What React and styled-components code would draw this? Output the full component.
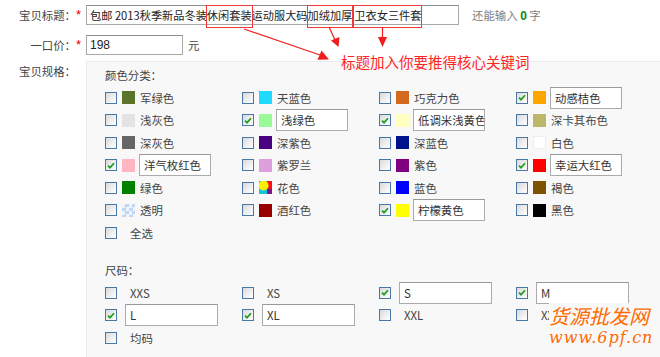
import React from 'react';
import styled, { createGlobalStyle } from 'styled-components';

const GlobalStyle = createGlobalStyle`
  html, body {
    margin: 0;
    padding: 0;
    background: #ffffff;
  }
`;

const colors = [
  { name: '军绿色', bg: '#5b742a' },
  { name: '天蓝色', bg: '#1edaff' },
  { name: '巧克力色', bg: '#d2691e' },
  { name: '动感桔色', bg: '#ffa500', on: true },
  { name: '浅灰色', bg: '#e3e3e3' },
  { name: '浅绿色', bg: '#98fb98', on: true },
  { name: '低调米浅黄色', bg: '#ffffc0', on: true },
  { name: '深卡其布色', bg: '#bdb76b' },
  { name: '深灰色', bg: '#666666' },
  { name: '深紫色', bg: '#4b0082' },
  { name: '深蓝色', bg: '#00138c' },
  { name: '白色', bg: '#ffffff' },
  { name: '洋气枚红色', bg: '#ffb6c1', on: true },
  { name: '紫罗兰', bg: '#dda0dd' },
  { name: '紫色', bg: '#800080' },
  { name: '幸运大红色', bg: '#ff0000', on: true },
  { name: '绿色', bg: '#008000' },
  { name: '花色', bg: 'flower' },
  { name: '蓝色', bg: '#0000ff' },
  { name: '褐色', bg: '#7f5200' },
  { name: '透明', bg: 'clear' },
  { name: '酒红色', bg: '#990000' },
  { name: '柠檬黄色', bg: '#ffff00', on: true },
  { name: '黑色', bg: '#000000' },
  { name: '全选' },
];

const sizes = [
  { name: 'XXS' },
  { name: 'XS' },
  { name: 'S', on: true },
  { name: 'M', on: true },
  { name: 'L', on: true },
  { name: 'XL', on: true },
  { name: 'XXL' },
  { name: 'XXXL' },
  { name: '均码' },
];

const Check = ({ on }) => (
  <CheckBox>
    {on && (
      <svg width="11" height="11" viewBox="0 0 11 11">
        <path d="M2.2 5.6 L4.4 7.9 L8.8 3" fill="none" stroke="#1f9e1f" strokeWidth="1.9" />
      </svg>
    )}
  </CheckBox>
);

const Flower = () => (
  <svg width="13" height="13" viewBox="0 0 13 13">
    <rect width="13" height="13" fill="#10c8dc" />
    <rect x="8" width="5" height="13" fill="#ff1010" />
    <rect x="8" y="8" width="5" height="5" fill="#7a1a8a" />
    <circle cx="4.5" cy="4.5" r="5" fill="#fff000" />
  </svg>
);

const ColorItem = ({ item }) => (
  <Item>
    <Check on={item.on} />
    {item.bg && (
      <Swatch $bg={item.bg}>{item.bg === 'flower' && <Flower />}</Swatch>
    )}
    {item.on ? (
      <TextBox $w={72} $ml={9}>{item.name}</TextBox>
    ) : (
      <ItemLabel $ml={item.bg ? 5 : 8}>{item.name}</ItemLabel>
    )}
  </Item>
);

const SizeItem = ({ item }) => (
  <Item>
    <Check on={item.on} />
    {item.on ? (
      <TextBox $w={93} $ml={8}>{item.name}</TextBox>
    ) : (
      <ItemLabel $ml={8}>{item.name}</ItemLabel>
    )}
  </Item>
);

const App = () => (
  <Page>
    <GlobalStyle />
    <Row $mb={10}>
      <Label>
        宝贝标题：<Star>*</Star>
      </Label>
      <TitleBox>
        包邮 2013秋季新品冬装<Mark>休闲套装</Mark>运动服大码<Mark>加绒加厚</Mark>
        <Gap />
        <Mark>卫衣女三件套</Mark>
      </TitleBox>
      <Counter>
        还能输入 <Count>0</Count> 字
      </Counter>
    </Row>
    <Row $mb={6}>
      <Label>
        一口价：<Star>*</Star>
      </Label>
      <PriceBox>198</PriceBox>
      <Unit>元</Unit>
    </Row>
    <SpecRow>
      <Label $top={3}>
        宝贝规格：<Star />
      </Label>
      <Panel>
        <SectionTitle>颜色分类：</SectionTitle>
        <Grid>
          {colors.map((c) => (
            <ColorItem key={c.name} item={c} />
          ))}
        </Grid>
        <SectionTitle $mt={19}>尺码：</SectionTitle>
        <Grid>
          {sizes.map((s) => (
            <SizeItem key={s.name} item={s} />
          ))}
        </Grid>
      </Panel>
    </SpecRow>

    <Arrows width="660" height="357" viewBox="0 0 660 357">
      <g stroke="#f21c1c" strokeWidth="1.2" fill="none">
        <line x1="244" y1="29" x2="320" y2="55" />
        <line x1="329" y1="27" x2="335" y2="40" />
        <line x1="382.5" y1="27" x2="382.5" y2="38" />
      </g>
      <g fill="#f21c1c">
        <polygon points="329,59.5 317.5,59.8 321.5,50.5" />
        <polygon points="338.5,47 331,40.5 339.5,37" />
        <polygon points="382.5,47 378,37 387,37" />
      </g>
    </Arrows>
    <Hint>标题加入你要推得核心关键词</Hint>
    <Watermark>
      <WatermarkName>货源批发网</WatermarkName>
      <WatermarkUrl>www.6pf.cn</WatermarkUrl>
    </Watermark>
  </Page>
);

export default App;

const Page = styled.div`
  position: relative;
  width: 660px;
  height: 357px;
  overflow: hidden;
  box-sizing: border-box;
  padding-top: 5px;
  background: #ffffff;
  font-family: "Noto Sans CJK SC", "Liberation Sans", sans-serif;
  font-size: 11.4px;
  color: #444444;
`;

const Row = styled.div`
  display: flex;
  align-items: center;
  height: 20px;
  margin-bottom: ${(p) => p.$mb}px;
`;

const SpecRow = styled.div`
  display: flex;
  align-items: flex-start;
`;

const Label = styled.div`
  width: 86px;
  flex: none;
  display: flex;
  justify-content: flex-end;
  line-height: 14px;
  padding-top: ${(p) => p.$top || 0}px;
  color: #444444;
  white-space: nowrap;
`;

const Star = styled.span`
  width: 10px;
  color: #e60000;
  font-family: "Liberation Sans", sans-serif;
  font-size: 13px;
  line-height: 14px;
`;

const Field = styled.div`
  box-sizing: border-box;
  height: 20px;
  border: 1px solid #a9a9a9;
  border-top-color: #8e8e8e;
  background: #ffffff;
  display: flex;
  align-items: center;
  white-space: nowrap;
  color: #222222;
`;

const TitleBox = styled(Field)`
  width: 373px;
  padding-left: 3px;
  font-size: 11.2px;
  overflow: visible;
`;

const PriceBox = styled(Field)`
  width: 97px;
  padding-left: 3px;
  font-family: "Liberation Sans", sans-serif;
  font-size: 12px;
`;

const Mark = styled.span`
  position: relative;
  &::after {
    content: '';
    position: absolute;
    left: -1px;
    right: -1px;
    top: -2px;
    bottom: -5px;
    border: 1.4px solid #ee3a3a;
  }
`;

const Gap = styled.span`
  display: inline-block;
  width: 2px;
`;

const Counter = styled.div`
  margin-left: 13px;
  color: #808080;
  white-space: nowrap;
`;

const Count = styled.b`
  color: #0a8a0a;
  font-family: "Liberation Sans", sans-serif;
  font-size: 12px;
`;

const Unit = styled.span`
  margin-left: 5px;
  color: #444444;
`;

const Panel = styled.div`
  flex: 1;
  height: 300px;
  box-sizing: border-box;
  padding: 6px 0 0 18px;
  background: #f8f8f8;
  border-top: 1px solid #ececec;
  border-left: 1px solid #ececec;
`;

const SectionTitle = styled.div`
  line-height: 14px;
  margin-top: ${(p) => p.$mt || 0}px;
  margin-bottom: 4.5px;
  color: #444444;
`;

const Grid = styled.div`
  display: grid;
  grid-template-columns: repeat(4, 137px);
  grid-auto-rows: 22.5px;
`;

const Item = styled.div`
  display: flex;
  align-items: center;
  white-space: nowrap;
`;

const CheckBox = styled.span`
  box-sizing: border-box;
  width: 12px;
  height: 12px;
  flex: none;
  border: 1px solid #4a77a6;
  background: linear-gradient(135deg, #d9d9d9 0%, #efefef 55%, #ffffff 100%);
  display: flex;
  align-items: center;
  justify-content: center;
  margin-right: 5px;
  svg {
    display: block;
  }
`;

const swatchBg = (bg) => {
  if (bg === 'clear') {
    return 'repeating-conic-gradient(#c3d7f3 0 25%, #eef4fc 0 50%) 0 0 / 7px 7px';
  }
  if (bg === 'flower') return 'transparent';
  return bg;
};

const Swatch = styled.span`
  box-sizing: border-box;
  width: 13px;
  height: 13px;
  flex: none;
  background: ${(p) => swatchBg(p.$bg)};
  border: ${(p) => (p.$bg === '#ffffff' ? '1px solid #eeeeee' : 'none')};
  svg {
    display: block;
  }
`;

const ItemLabel = styled.span`
  margin-left: ${(p) => p.$ml}px;
  line-height: 14px;
  color: #444444;
`;

const TextBox = styled.span`
  box-sizing: border-box;
  width: ${(p) => p.$w}px;
  height: 22px;
  margin-left: ${(p) => p.$ml - 5}px;
  padding-left: 4px;
  display: flex;
  align-items: center;
  background: #ffffff;
  border: 1px solid #ababab;
  border-top-color: #999999;
  color: #333333;
  overflow: hidden;
`;

const Arrows = styled.svg`
  position: absolute;
  left: 0;
  top: 0;
  pointer-events: none;
`;

const Hint = styled.div`
  position: absolute;
  left: 341px;
  top: 53px;
  font-size: 14.5px;
  line-height: 18px;
  color: #ff2424;
  white-space: nowrap;
`;

const Watermark = styled.div`
  position: absolute;
  left: 549px;
  top: 303px;
  display: flex;
  flex-direction: column;
  color: #ff6a00;
  background: #f8f8f8;
`;

const WatermarkName = styled.span`
  font-size: 20px;
  line-height: 25px;
  font-style: italic;
`;

const WatermarkUrl = styled.span`
  font-family: "DejaVu Serif", serif;
  font-style: italic;
  font-size: 16px;
  line-height: 20px;
  letter-spacing: 1px;
`;
